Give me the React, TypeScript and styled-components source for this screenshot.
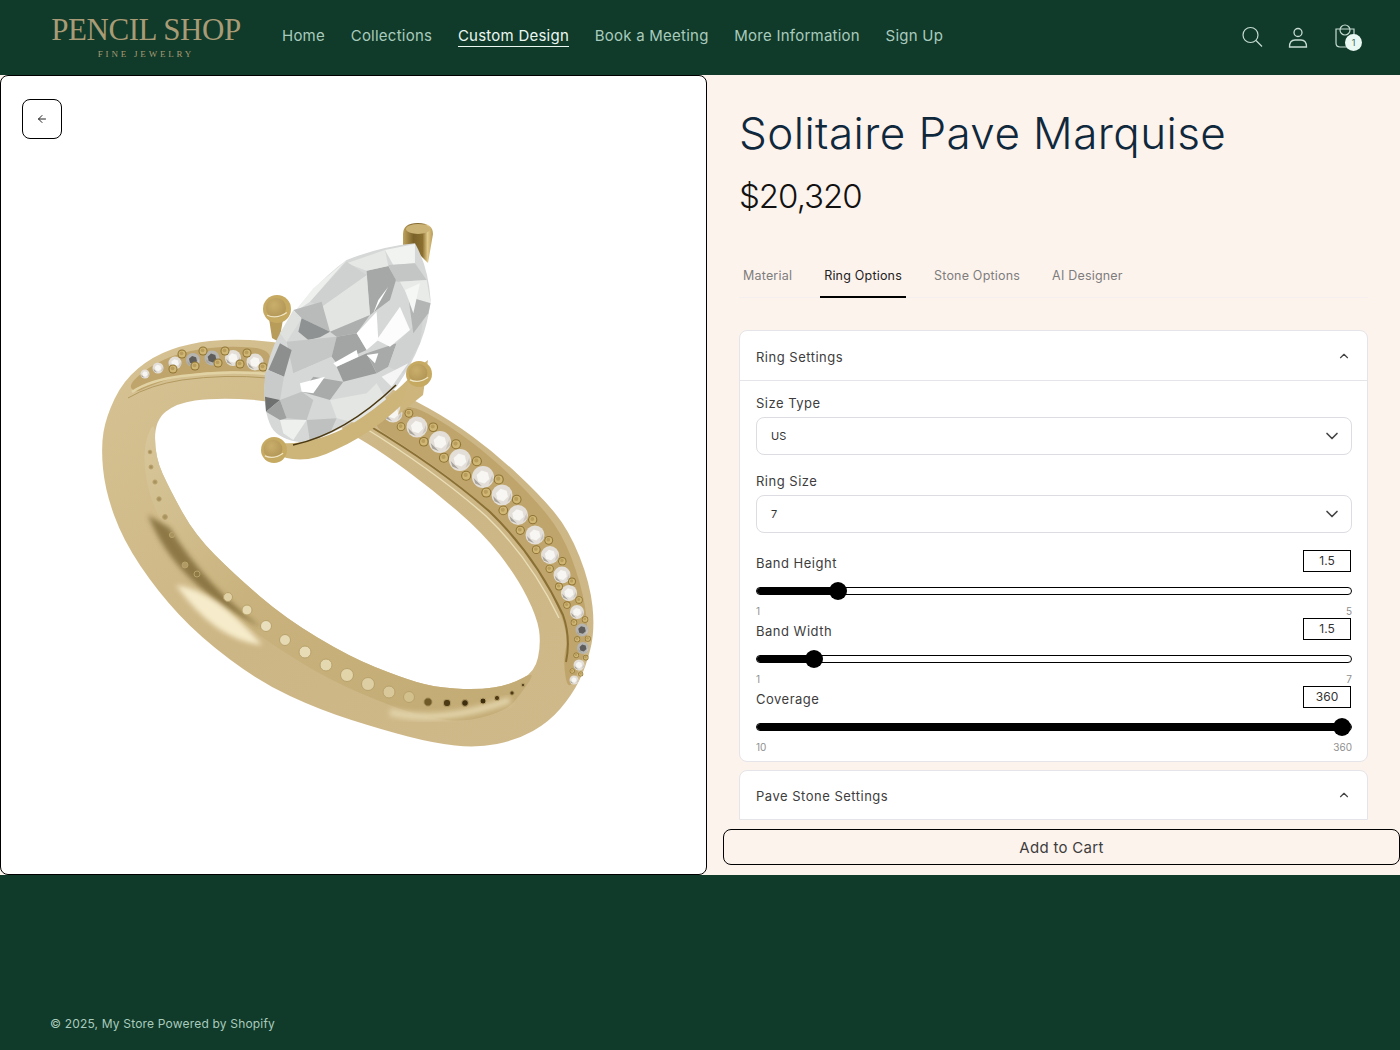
import styled, { createGlobalStyle } from 'styled-components';
import { ArrowLeft, ChevronDown, ChevronUp } from 'lucide-react';

const GlobalStyle = createGlobalStyle`
  html, body {
    margin: 0;
    padding: 0;
    background: #103a29;
  }
  * {
    box-sizing: border-box;
  }
`;

const Page = styled.div`
  width: 1400px;
  height: 1050px;
  display: flex;
  flex-direction: column;
  overflow: hidden;
  font-family: Inter, 'Liberation Sans', sans-serif;
`;

const Header = styled.header`
  height: 75px;
  flex: none;
  display: flex;
  align-items: center;
  padding: 0 40px 0 52px;
  background: #103a29;
`;
const Logo = styled.div`
  width: 188px;
  margin-right: 42px;
  display: flex;
  flex-direction: column;
  align-items: center;
  font-family: 'Liberation Serif', serif;
  color: #a89b76;
`;
const LogoName = styled.div`
  font-size: 31px;
  line-height: 30px;
  letter-spacing: -0.45px;
  white-space: nowrap;
`;
const LogoSub = styled.div`
  margin-top: 4px;
  font-size: 9px;
  line-height: 11px;
  letter-spacing: 2.8px;
  white-space: nowrap;
`;
const Nav = styled.nav`
  display: flex;
  gap: 25.7px;
  flex: 1;
  margin-top: -2px;
`;
const NavLink = styled.a<{ $active?: boolean }>`
  font-size: 15px;
  line-height: 20px;
  letter-spacing: 0.24px;
  color: ${({ $active }) => ($active ? '#eaf7f1' : '#a8cbbd')};
  border-bottom: 1px solid ${({ $active }) => ($active ? '#eaf7f1' : 'transparent')};
`;
const HeaderIcons = styled.div`
  display: flex;
  align-items: center;
  gap: 19px;
  margin-top: -2px;
`;
const IconBox = styled.div`
  position: relative;
  width: 28px;
  height: 28px;
  color: #c6dcd3;
`;
const Badge = styled.span`
  position: absolute;
  right: -2px;
  bottom: 0;
  width: 17px;
  height: 17px;
  border-radius: 50%;
  background: #e9f8f2;
  color: #3f6a58;
  font-size: 9px;
  line-height: 17px;
  text-align: center;
`;

const Main = styled.main`
  height: 800px;
  flex: none;
  display: flex;
  background: #fdf3ed;
`;
const ImagePanel = styled.section`
  position: relative;
  width: 707px;
  flex: none;
  background: #fff;
  border: 1px solid #000;
  border-radius: 8px;
  overflow: hidden;
`;
const BackButton = styled.button`
  position: absolute;
  left: 21px;
  top: 23px;
  width: 40px;
  height: 40px;
  display: flex;
  align-items: center;
  justify-content: center;
  padding: 0;
  background: #fff;
  border: 1px solid #000;
  border-radius: 8px;
  color: #222;
`;
const RingSvg = styled.svg`
  display: block;
  width: 705px;
  height: 798px;
`;

const Details = styled.section`
  flex: 1;
  min-width: 0;
  display: flex;
  flex-direction: column;
  padding-bottom: 10px;
`;
const Scroll = styled.div`
  flex: 1;
  min-height: 0;
  overflow: hidden;
  padding: 29px 32px 0 32px;
`;
const Title = styled.h1`
  margin: 0;
  font-size: 44px;
  line-height: 58px;
  font-weight: 300;
  letter-spacing: 0.42px;
  color: #10283c;
  white-space: nowrap;
`;
const Price = styled.div`
  margin-top: 14px;
  font-size: 33px;
  line-height: 40px;
  font-weight: 300;
  letter-spacing: -1px;
  color: #111;
`;
const Tabs = styled.div`
  margin-top: 39px;
  display: flex;
  gap: 24px;
  height: 43px;
  border-bottom: 1px solid #f6efef;
`;
const Tab = styled.div<{ $active?: boolean }>`
  height: 43px;
  padding: 12px 4px 0;
  font-size: 12.5px;
  line-height: 18px;
  letter-spacing: 0.2px;
  color: ${({ $active }) => ($active ? '#222' : '#7d7d7d')};
  border-bottom: 2px solid ${({ $active }) => ($active ? '#000' : 'transparent')};
`;
const Card = styled.div`
  margin-bottom: 8px;
  background: #fff;
  border: 1px solid #e4e4e9;
  border-radius: 8px;
`;
const FirstCard = styled(Card)`
  margin-top: 32px;
`;
const ClippedCard = styled(Card)`
  margin-bottom: 0;
  border-radius: 8px 8px 0 0;
`;
const CardHeader = styled.div<{ $divided?: boolean }>`
  height: ${({ $divided }) => ($divided ? '50px' : '48px')};
  display: flex;
  align-items: center;
  justify-content: space-between;
  padding: 2px 16px 0;
  font-size: 13px;
  letter-spacing: 0.5px;
  color: #3d3d3d;
  border-bottom: 1px solid ${({ $divided }) => ($divided ? '#e4e4e9' : 'transparent')};
`;
const HeaderChevron = styled(ChevronUp)`
  margin-top: -2px;
`;
const CardBody = styled.div`
  padding: 14px 15px 7px 16px;
`;
const FieldLabel = styled.div`
  font-size: 13px;
  line-height: 16px;
  letter-spacing: 0.5px;
  color: #3d3d3d;
`;
const SelectBox = styled.div`
  height: 38px;
  margin: 6px 0 18px;
  padding: 0 9px 0 14px;
  display: flex;
  align-items: center;
  justify-content: space-between;
  border: 1px solid #dcdce2;
  border-radius: 8px;
  font-size: 11px;
  color: #333;
`;
const Sliders = styled.div`
  margin-top: -1px;
`;
const SliderRow = styled.div`
  margin-bottom: 2px;
`;
const SliderHead = styled.div`
  height: 22px;
  display: flex;
  justify-content: space-between;
  align-items: flex-end;
`;
const SliderLabel = styled(FieldLabel)`
  margin-bottom: 1px;
`;
const ValueBox = styled.div`
  width: 48px;
  height: 22px;
  margin-right: 1px;
  border: 1px solid #000;
  font-size: 12px;
  line-height: 20px;
  text-align: center;
  color: #333;
`;
const Track = styled.div`
  position: relative;
  height: 8px;
  margin-top: 15px;
  background: #fff;
  border: 1px solid #000;
  border-radius: 4px;
`;
const TrackFill = styled.div`
  height: 100%;
  background: #000;
  border-radius: 4px 0 0 4px;
`;
const Thumb = styled.div`
  position: absolute;
  top: -6px;
  width: 18px;
  height: 18px;
  margin-left: -9px;
  background: #000;
  border-radius: 50%;
`;
const Range = styled.div`
  height: 10px;
  margin-top: 11px;
  display: flex;
  justify-content: space-between;
  font-size: 10px;
  line-height: 10px;
  color: #8f8f8f;
`;
const AddToCart = styled.button`
  width: 677px;
  height: 36px;
  margin-left: 16px;
  flex: none;
  background: #fdf3ed;
  border: 1px solid #000;
  border-radius: 8px;
  font-family: inherit;
  font-size: 15px;
  letter-spacing: 0.3px;
  color: #3d3d3d;
`;

const Footer = styled.footer`
  flex: 1;
  display: flex;
  align-items: flex-end;
  padding: 0 50px 18px;
  background: #103a29;
  font-size: 12px;
  line-height: 16px;
  letter-spacing: 0.18px;
  color: #a8cbbd;
`;

type Pt = [number, number];

// closed smooth outline through the traced points
const smooth = (pts: Pt[]) => {
  const mid = (a: Pt, b: Pt) => `${(a[0] + b[0]) / 2} ${(a[1] + b[1]) / 2}`;
  let d = `M${mid(pts[pts.length - 1], pts[0])}`;
  pts.forEach((p, i) => {
    d += `Q${p[0]} ${p[1]} ${mid(p, pts[(i + 1) % pts.length])}`;
  });
  return d + 'Z';
};

const outer: Pt[] = [
  [270, 341], [230, 339], [190, 343], [153, 356], [123, 381], [106, 417], [101, 447], [105, 490],
  [123, 540], [158, 592], [200, 637], [260, 682], [320, 710], [383, 730], [433, 743], [477, 748],
  [517, 740], [549, 722], [572, 695], [586, 667], [595, 630], [590, 583], [569, 530], [540, 495],
  [495, 453], [450, 420], [410, 398], [380, 383], [310, 348],
];
const hole: Pt[] = [
  [265, 400], [213, 398], [177, 403], [155, 420], [155, 457], [170, 490], [195, 535], [235, 575],
  [285, 618], [350, 657], [400, 677], [433, 687], [477, 690], [510, 685], [535, 672], [541, 643],
  [537, 617], [517, 577], [483, 533], [433, 490], [383, 453], [350, 433], [310, 410],
];
const innerWall: Pt[] = [
  [155, 418], [155, 457], [170, 490], [195, 535], [235, 575], [285, 618], [350, 657], [400, 677],
  [433, 687], [477, 690], [510, 685], [537, 670], [520, 695], [507, 710], [467, 722], [427, 718],
  [383, 703], [330, 680], [280, 650], [230, 615], [190, 575], [165, 530], [147, 490], [143, 447],
];
const rightStrip: Pt[] = [
  [405, 401], [450, 426], [490, 456], [532, 496], [562, 533], [581, 583], [589, 630], [582, 664],
  [568, 693], [563, 660], [568, 640], [561, 613], [545, 580], [521, 547], [488, 510], [450, 477],
  [400, 443], [368, 423],
];
const leftStrip: Pt[] = [
  [272, 349], [230, 346], [190, 350], [156, 362], [128, 384], [135, 393], [147, 387], [180, 375],
  [227, 370], [268, 373],
];

const rightStones: [number, number, number][] = [
  [393, 413, 9.5], [417, 427, 10.5], [440, 442, 11], [460, 460, 11], [483, 477, 11], [502, 495, 10.5],
  [518, 515, 10], [535, 535, 9.5], [550, 555, 9], [562, 575, 8.5], [569, 593, 8], [577, 612, 7],
  [582, 630, 6.5], [583, 648, 6], [579, 665, 5.5], [574, 680, 4.5],
];
const leftStones: [number, number, number][] = [
  [145, 374, 4.5], [158, 368, 5.5], [175, 363, 6.5], [193, 360, 7], [212, 358, 7.5], [233, 358, 8], [255, 362, 8.5],
];
const leftBeads: Pt[] = [
  [203, 351], [225, 351], [247, 353], [263, 367], [240, 364], [218, 363], [195, 366], [173, 369], [182, 354],
];
const wallDots: [number, number, number, string][] = [
  [150, 452, 1.8, '#a8935f'], [151, 467, 2, '#a8935f'], [155, 482, 2.1, '#a8935f'], [159, 499, 2.2, '#a8935f'],
  [165, 517, 2.4, '#a8935f'], [172, 535, 2.6, '#a8935f'], [185, 565, 3, '#b09a65'], [197, 574, 3, '#8e7a45'],
  [228, 597, 4.5, '#e0d2a6'], [247, 610, 5, '#e6dab2'], [266, 626, 5.5, '#e9dfbd'], [285, 640, 5.5, '#e6dab5'],
  [305, 652, 6, '#e7dcb6'], [326, 665, 6, '#e4d8b0'], [347, 675, 6.5, '#e2d5aa'], [368, 684, 6.5, '#ddcfa3'],
  [389, 692, 6, '#d9c99a'], [409, 697, 5.5, '#d2c08d'], [428, 702, 4.2, '#6f5a28'], [447, 703, 3.8, '#4d3b15'],
  [465, 703, 3.4, '#3d2e10'], [483, 701, 3, '#3d2e10'], [497, 698, 2.6, '#4d3b15'], [512, 693, 2.2, '#4d3b15'],
  [523, 685, 1.8, '#5a4822'],
];

// facets of the stone, traced at 3x (see the group's scale)
const facets: [string, string][] = [
  ['1005,132 915,150 940,195 1005,190', '#f1f3f1'],
  ['925,195 1005,190 1040,240 950,245', '#c4c6c5'],
  ['1040,240 1052,310 985,290 960,245', '#e9ebe9'],
  ['860,212 925,198 948,240 930,300 870,345', '#a6a8a8'],
  ['915,150 925,198 860,212 800,190', '#e6e8e6'],
  ['725,320 860,225 870,345 750,395', '#e2e5e2'],
  ['800,185 860,225 725,320 690,305', '#cfd1d0'],
  ['700,265 800,180 690,305 640,340', '#eef0ee'],
  ['640,330 725,305 750,395 665,355', '#b9bbba'],
  ['600,400 640,330 665,355 620,425', '#dfe1df'],
  ['665,355 750,395 720,412 685,420 655,395', '#8f9292'],
  ['750,395 870,345 830,400 770,410', '#adafaf'],
  ['620,425 770,410 755,470 640,520', '#c5c7c6'],
  ['770,410 830,400 860,450 770,490 755,470', '#a3a5a5'],
  ['600,430 635,450 612,530 565,510', '#8d8f8e'],
  ['555,520 565,510 612,530 600,600 552,590', '#c9cbca'],
  ['640,520 755,470 770,500 700,530 660,560', '#d6d8d7'],
  ['770,500 860,460 890,520 790,545', '#9b9d9d'],
  ['700,530 790,545 750,600 665,575', '#a9abab'],
  ['600,600 665,575 700,600 680,660 620,655', '#c1c3c2'],
  ['555,590 600,600 558,635', '#6e7170'],
  ['558,635 600,600 620,655 600,660', '#9fa1a1'],
  ['600,660 680,660 640,720 610,700', '#eef0ee'],
  ['680,660 770,655 750,700 690,725', '#bfc1c0'],
  ['750,600 860,580 890,550 920,600 830,670 770,655', '#e3e6e3'],
  ['860,460 950,430 925,500 890,520', '#a8aaaa'],
  ['950,430 1030,350 1020,430 970,520 925,500', '#d0d2d1'],
  ['985,290 1052,310 1045,340 1000,400', '#b3b5b5'],
  ['830,400 890,335 895,420 860,450', '#ffffff'],
  ['890,420 960,320 990,390 930,440', '#fbfcfb'],
  ['660,550 735,530 700,580 665,575', '#ffffff'],
  ['760,490 830,450 835,470 770,500', '#ffffff'],
  ['880,340 925,260 895,300', '#ffffff'],
  ['860,465 895,460 885,490', '#ffffff'],
  ['975,270 1020,250 1000,340', '#f5f7f5'],
  ['905,530 985,490 935,560', '#f4f5f4'],
];

const sliders = [
  { label: 'Band Height', value: '1.5', min: '1', max: '5', pct: 13.6 },
  { label: 'Band Width', value: '1.5', min: '1', max: '7', pct: 9.6 },
  { label: 'Coverage', value: '360', min: '10', max: '360', pct: 98.5 },
];

const PaveStone = ({ x, y, r, dark }: { x: number; y: number; r: number; dark?: boolean }) => {
  const table = [0, 1, 2, 3, 4, 5]
    .map((i) => {
      const a = (i * Math.PI) / 3 + 0.3;
      return `${x + Math.cos(a) * r * 0.6},${y + Math.sin(a) * r * 0.6}`;
    })
    .join(' ');
  return (
    <g>
      <circle cx={x} cy={y} r={r} fill={dark ? '#b5b4b1' : '#e3dfd8'} />
      <polygon points={table} fill={dark ? '#5e5d5b' : '#f7f6f3'} />
      <path d={`M${x - r * 0.85} ${y + r * 0.1}L${x - r * 0.1} ${y + r * 0.85}L${x - r * 0.7} ${y + r * 0.6}Z`} fill="#a8a49d" />
      <path d={`M${x + r * 0.85} ${y - r * 0.2}L${x + r * 0.5} ${y + r * 0.7}L${x + r * 0.9} ${y + r * 0.35}Z`} fill="#c9c5be" />
    </g>
  );
};

const Bead = ({ x, y, r }: { x: number; y: number; r: number }) => (
  <g>
    <circle cx={x} cy={y} r={r} fill="#8f7434" />
    <circle cx={x} cy={y} r={r * 0.78} fill="#d0b775" />
    <circle cx={x - r * 0.1} cy={y - r * 0.15} r={r * 0.42} fill="#b89d5c" />
  </g>
);

const Prong = ({ x, y, r }: { x: number; y: number; r: number }) => (
  <g>
    <circle cx={x} cy={y} r={r} fill="#c6aa62" />
    <circle cx={x - 1} cy={y - 1} r={r * 0.72} fill="url(#prongHead)" />
    <path d={`M${x - r * 0.7} ${y + r * 0.45}Q${x} ${y + r * 0.75} ${x + r * 0.7} ${y + r * 0.25}`} stroke="#f1e6c4" strokeWidth="1.2" fill="none" />
  </g>
);

const RingDrawing = () => {
  const beads: { x: number; y: number; r: number }[] = [];
  rightStones.slice(0, -1).forEach((s, i) => {
    const n = rightStones[i + 1];
    const dx = n[0] - s[0];
    const dy = n[1] - s[1];
    const len = Math.hypot(dx, dy);
    const off = s[2] * 0.82;
    const r = Math.max(2, s[2] * 0.46);
    const mx = (s[0] + n[0]) / 2;
    const my = (s[1] + n[1]) / 2;
    beads.push({ x: mx + (dy / len) * off, y: my - (dx / len) * off, r });
    beads.push({ x: mx - (dy / len) * off, y: my + (dx / len) * off, r });
  });

  return (
    <RingSvg viewBox="1 76 705 798">
      <defs>
        <linearGradient id="bandFace" x1="0" y1="0" x2="1" y2="1">
          <stop offset="0" stopColor="#d6c293" />
          <stop offset="0.5" stopColor="#cdb685" />
          <stop offset="1" stopColor="#cfb98a" />
        </linearGradient>
        <linearGradient id="wall" x1="0" y1="0" x2="1" y2="0.7">
          <stop offset="0" stopColor="#d8c79b" />
          <stop offset="0.45" stopColor="#c9b27d" />
          <stop offset="1" stopColor="#c4ac76" />
        </linearGradient>
        <radialGradient id="prongHead" cx="0.4" cy="0.35" r="0.8">
          <stop offset="0" stopColor="#c9ae6b" />
          <stop offset="1" stopColor="#ad9152" />
        </radialGradient>
        <linearGradient id="shaft" x1="0" y1="0" x2="1" y2="0">
          <stop offset="0" stopColor="#bfa25c" />
          <stop offset="0.35" stopColor="#7a6128" />
          <stop offset="0.65" stopColor="#8a6f30" />
          <stop offset="0.82" stopColor="#e2cb8c" />
          <stop offset="1" stopColor="#b69a58" />
        </linearGradient>
        <filter id="soft" x="-30%" y="-30%" width="160%" height="160%">
          <feGaussianBlur stdDeviation="2.5" />
        </filter>
      </defs>

      <path d={smooth(outer) + smooth(hole)} fillRule="evenodd" fill="url(#bandFace)" />
      <path d={smooth(innerWall)} fill="url(#wall)" />
      <path d="M148 515Q175 585 262 628Q205 585 170 528Z" fill="#7d6836" filter="url(#soft)" opacity="0.8" />
      <path d="M176 585Q215 590 262 645Q215 640 176 585Z" fill="#f6eccb" filter="url(#soft)" />
      <path d="M390 712Q440 725 510 700" stroke="#e1d3a9" strokeWidth="7" fill="none" filter="url(#soft)" />
      {wallDots.map(([x, y, r, c]) => (
        <circle key={`${x}-${y}`} cx={x} cy={y} r={r} fill={c} stroke="#b9a16a" strokeWidth="1" />
      ))}

      <path d={smooth(rightStrip)} fill="#bfa56c" />
      <path d="M368 425Q440 468 490 512Q535 555 563 615Q571 638 566 662" stroke="#8a7034" strokeWidth="2" fill="none" />
      <path d="M365 428Q436 472 486 516Q530 558 559 618" stroke="#eadeb6" strokeWidth="1.4" fill="none" />
      <path d={smooth(leftStrip)} fill="#bfa56c" />
      <path d="M132 392Q150 380 182 376Q225 370 268 374" stroke="#e2d3a5" strokeWidth="2.5" fill="none" />
      <path d="M128 398Q150 385 182 380Q225 374 268 378" stroke="#b39a60" strokeWidth="1" fill="none" />

      {rightStones.map(([x, y, r], i) => (
        <PaveStone key={`r${i}`} x={x} y={y} r={r} dark={i === 12 || i === 13} />
      ))}
      {beads.map((b, i) => (
        <Bead key={`b${i}`} x={b.x} y={b.y} r={b.r} />
      ))}
      {leftStones.map(([x, y, r], i) => (
        <PaveStone key={`l${i}`} x={x} y={y} r={r} dark={i === 3 || i === 4} />
      ))}
      {leftBeads.map(([x, y], i) => (
        <Bead key={`lb${i}`} x={x} y={y} r={4.5} />
      ))}

      <path d="M403 234Q403 223 418 223Q433 223 433 234L428 263L415 250L403 245Z" fill="url(#shaft)" />
      <ellipse cx="418" cy="229" rx="12" ry="5" fill="#cbb376" />
      <path d="M268 312L284 314L279 342L272 338Z" fill="#b89c5a" />

      <g transform="translate(80 200) scale(0.3333)">
        <path
          d="M1005 130Q1045 200 1052 300Q1040 430 950 560Q830 680 680 728Q610 725 580 690Q552 650 553 560Q560 470 600 400Q690 260 800 180Q900 140 1005 130Z"
          fill="#d6d8d7"
        />
        {facets.map(([points, fill]) => (
          <polygon key={points} points={points} fill={fill} />
        ))}
      </g>

      <path d="M272 452Q300 468 335 450Q385 428 425 380L421 366Q385 405 345 428Q310 445 282 443Z" fill="#cdb57a" />
      <path d="M293 445Q345 434 396 385" stroke="#4b3810" strokeWidth="1.6" fill="none" />
      <path d="M412 372L428 360L423 395L398 415Z" fill="#cdb57c" />

      <Prong x={277} y={309} r={14} />
      <Prong x={419} y={374} r={13} />
      <Prong x={274} y={450} r={13} />
    </RingSvg>
  );
};

const SearchIcon = () => (
  <svg width="28" height="28" viewBox="0 0 28 28" fill="none" stroke="currentColor" strokeWidth="1.2">
    <circle cx="12.5" cy="12" r="7.5" />
    <path d="M18 17.5L24 23.5" />
  </svg>
);
const UserIcon = () => (
  <svg width="28" height="28" viewBox="0 0 28 28" fill="none" stroke="currentColor" strokeWidth="1.3">
    <circle cx="13" cy="9.5" r="4" />
    <path d="M4.5 24Q4.5 17 10 17H16Q21.5 17 21.5 24Z" />
  </svg>
);
const BagIcon = () => (
  <svg width="28" height="28" viewBox="0 0 28 28" fill="none" stroke="currentColor" strokeWidth="1.2">
    <path d="M4 6H22V20Q22 24 18 24H8Q4 24 4 20Z" />
    <circle cx="13" cy="7" r="5" />
  </svg>
);

export default function App() {
  return (
    <Page>
      <GlobalStyle />
      <Header>
        <Logo>
          <LogoName>PENCIL SHOP</LogoName>
          <LogoSub>FINE JEWELRY</LogoSub>
        </Logo>
        <Nav>
          <NavLink>Home</NavLink>
          <NavLink>Collections</NavLink>
          <NavLink $active>Custom Design</NavLink>
          <NavLink>Book a Meeting</NavLink>
          <NavLink>More Information</NavLink>
          <NavLink>Sign Up</NavLink>
        </Nav>
        <HeaderIcons>
          <IconBox>
            <SearchIcon />
          </IconBox>
          <IconBox>
            <UserIcon />
          </IconBox>
          <IconBox>
            <BagIcon />
            <Badge>1</Badge>
          </IconBox>
        </HeaderIcons>
      </Header>

      <Main>
        <ImagePanel>
          <BackButton>
            <ArrowLeft size={12} strokeWidth={2} />
          </BackButton>
          <RingDrawing />
        </ImagePanel>

        <Details>
          <Scroll>
            <Title>Solitaire Pave Marquise</Title>
            <Price>$20,320</Price>
            <Tabs>
              <Tab>Material</Tab>
              <Tab $active>Ring Options</Tab>
              <Tab>Stone Options</Tab>
              <Tab>AI Designer</Tab>
            </Tabs>

            <FirstCard>
              <CardHeader $divided>
                Ring Settings
                <HeaderChevron size={14} color="#444" />
              </CardHeader>
              <CardBody>
                <FieldLabel>Size Type</FieldLabel>
                <SelectBox>
                  US
                  <ChevronDown size={20} color="#444" />
                </SelectBox>
                <FieldLabel>Ring Size</FieldLabel>
                <SelectBox>
                  7
                  <ChevronDown size={20} color="#444" />
                </SelectBox>
                <Sliders>
                  {sliders.map((s) => (
                    <SliderRow key={s.label}>
                      <SliderHead>
                        <SliderLabel>{s.label}</SliderLabel>
                        <ValueBox>{s.value}</ValueBox>
                      </SliderHead>
                      <Track>
                        <TrackFill style={{ width: `${s.pct}%` }} />
                        <Thumb style={{ left: `${s.pct}%` }} />
                      </Track>
                      <Range>
                        <span>{s.min}</span>
                        <span>{s.max}</span>
                      </Range>
                    </SliderRow>
                  ))}
                </Sliders>
              </CardBody>
            </FirstCard>

            <ClippedCard>
              <CardHeader>
                Pave Stone Settings
                <HeaderChevron size={14} color="#444" />
              </CardHeader>
            </ClippedCard>
          </Scroll>
          <AddToCart>Add to Cart</AddToCart>
        </Details>
      </Main>

      <Footer>© 2025, My Store Powered by Shopify</Footer>
    </Page>
  );
}
